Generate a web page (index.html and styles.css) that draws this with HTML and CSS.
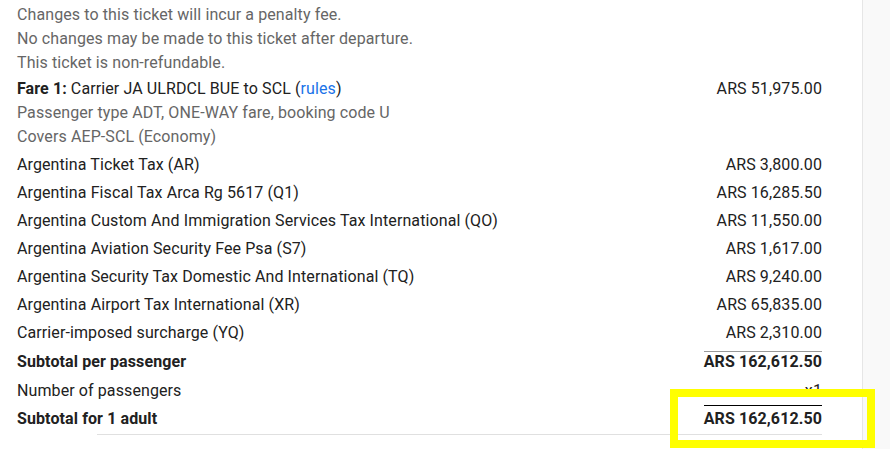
FILE: index.html
```html
<!DOCTYPE html>
<html>
<head>
<meta charset="utf-8">
<link rel="stylesheet" href="styles.css">
</head>
<body>
<div class="page">
  <main class="main">
    <div class="notes">
      <div>Changes to this ticket will incur a penalty fee.</div>
      <div>No changes may be made to this ticket after departure.</div>
      <div>This ticket is non-refundable.</div>
    </div>
    <div class="row">
      <div class="label">
        <div><b>Fare 1:</b> Carrier JA ULRDCL BUE to SCL (<a class="link" href="#">rules</a>)</div>
        <div class="sub">Passenger type ADT, ONE-WAY fare, booking code U</div>
        <div class="sub">Covers AEP-SCL (Economy)</div>
      </div>
      <div class="amount">ARS 51,975.00</div>
    </div>
    <div class="row"><div class="label">Argentina Ticket Tax (AR)</div><div class="amount">ARS 3,800.00</div></div>
    <div class="row"><div class="label">Argentina Fiscal Tax Arca Rg 5617 (Q1)</div><div class="amount">ARS 16,285.50</div></div>
    <div class="row"><div class="label">Argentina Custom And Immigration Services Tax International (QO)</div><div class="amount">ARS 11,550.00</div></div>
    <div class="row"><div class="label">Argentina Aviation Security Fee Psa (S7)</div><div class="amount">ARS 1,617.00</div></div>
    <div class="row"><div class="label">Argentina Security Tax Domestic And International (TQ)</div><div class="amount">ARS 9,240.00</div></div>
    <div class="row"><div class="label">Argentina Airport Tax International (XR)</div><div class="amount">ARS 65,835.00</div></div>
    <div class="row"><div class="label">Carrier-imposed surcharge (YQ)</div><div class="amount">ARS 2,310.00</div></div>
    <div class="row row-sub">
      <div class="label strong">Subtotal per passenger</div>
      <div class="amount strong rule-gray">ARS 162,612.50</div>
    </div>
    <div class="row"><div class="label">Number of passengers</div><div class="amount">x1</div></div>
    <div class="row row-total">
      <div class="label strong">Subtotal for 1 adult</div>
      <div class="amount strong rule-black">ARS 162,612.50</div>
    </div>
    <div class="divider"></div>
  </main>
  <aside class="side"></aside>
</div>
<div class="highlight"></div>
</body>
</html>
```
FILE: styles.css
```css
html, body {
  margin: 0;
  padding: 0;
  background: #fff;
}
body {
  font-family: Roboto, "Liberation Sans", Arial, sans-serif;
  font-size: 16px;
  line-height: 24px;
  letter-spacing: 0.1px;
  color: #212121;
  width: 890px;
  height: 449px;
  overflow: hidden;
  position: relative;
}
.page {
  display: flex;
  height: 449px;
}
.main {
  width: 862px;
  box-sizing: border-box;
  padding: 3px 40px 0 17px;
}
.side {
  flex: 1;
  background: #f9f9f9;
  border-left: 1px solid #e6e6e6;
}
.notes {
  color: #666;
}
.row {
  display: flex;
  justify-content: space-between;
  align-items: flex-start;
  padding: 2px 0;
}
.sub {
  color: #666;
}
.link {
  color: #1a73e8;
  text-decoration: none;
}
.amount {
  white-space: nowrap;
}
.strong {
  font-weight: 700;
}
.row-sub {
  padding: 4px 0 5px;
  line-height: 20px;
}
.row-sub .label {
  padding-top: 1px;
}
.rule-gray {
  border-top: 1px solid #999;
}
.row-total {
  padding: 0 0 2px;
}
.row-total .label {
  padding-top: 2px;
}
.rule-black {
  border-top: 1px solid #000;
  padding-top: 1px;
}
.divider {
  margin: 1px 0 0 80px;
  border-top: 1px solid #e0e0e0;
}
.highlight {
  position: absolute;
  left: 670px;
  top: 389px;
  width: 189px;
  height: 43px;
  border: 8px solid #ffff00;
}
```
